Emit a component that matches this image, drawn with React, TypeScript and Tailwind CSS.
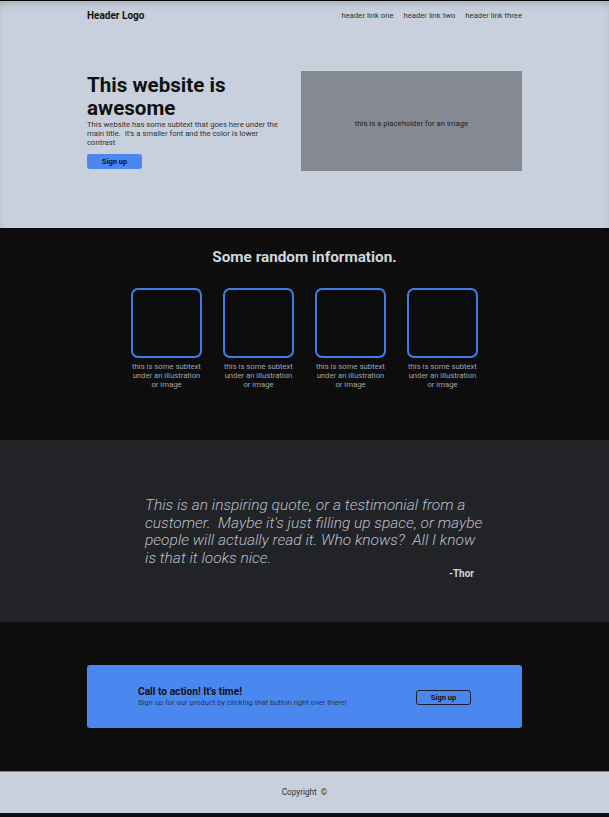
import React from "react";

const features = [1, 2, 3, 4];

export default function App() {
  return (
    <div
      className="bg-[#0d0d0d] min-h-screen"
      style={{ fontFamily: "Roboto, 'Noto Sans', sans-serif" }}
    >
      {/* Hero */}
      <section className="h-[228px] border-t border-black bg-[#c7d0dc] shadow-[inset_0_5px_8px_-4px_rgba(0,0,0,0.25)]">
        <div className="w-[435px] mx-auto">
          <header className="h-[28px] flex items-center justify-between">
            <span className="text-[10px] font-bold text-[#111]">Header Logo</span>
            <nav className="flex gap-[10px] pt-[2px] text-[7.7px] text-[#333]">
              <span>header link one</span>
              <span>header link two</span>
              <span>header link three</span>
            </nav>
          </header>
          <div className="mt-[42px] flex items-center justify-between">
            <div className="w-[198px] pt-[2px]">
              <h1 className="text-[20.6px] leading-[23px] font-bold text-[#111]">
                This website is awesome
              </h1>
              <p className="text-[7.7px] leading-[9px] text-[#333]">
                This website has some subtext that goes here under the main
                title.&nbsp; It's a smaller font and the color is lower contrast
              </p>
              <button className="mt-[5px] w-[55px] h-[15px] rounded-[3px] bg-[#4a88f0] text-[7.5px] font-bold text-[#111]">
                Sign up
              </button>
            </div>
            <div className="w-[221px] h-[100px] pt-[6px] bg-[#858a92] flex items-center justify-center text-[7.7px] text-[#222]">
              this is a placeholder for an image
            </div>
          </div>
        </div>
      </section>

      {/* Info */}
      <section className="h-[212px] bg-[#0d0d0d] pt-[19px]">
        <h2 className="text-center text-[15.3px] leading-[20px] font-bold text-[#d0d6df]">
          Some random information.
        </h2>
        <div className="mt-[21px] flex justify-center gap-[21px]">
          {features.map((f) => (
            <div key={f} className="w-[71px]">
              <div className="h-[70px] rounded-[7px] border-2 border-[#3f7de6]" />
              <p className="mt-[4px] -mx-[2px] text-center text-[7.7px] leading-[9px] text-[#a0a4ab]">
                this is some subtext under an illustration or image
              </p>
            </div>
          ))}
        </div>
      </section>

      {/* Quote */}
      <section className="h-[182px] bg-[#222327] pt-[57px]">
        <div className="w-[435px] mx-auto pl-[58px]">
          <div className="w-[338px]">
            <p className="text-[15.5px] leading-[17.7px] font-light italic text-[#b9bfc9]">
              This is an inspiring quote, or a testimonial from a customer.&nbsp;
              Maybe it's just filling up space, or maybe people will actually
              read it. Who knows?&nbsp; All I know is that it looks nice.
            </p>
            <p className="pr-[9px] text-right text-[10px] leading-[12px] font-bold text-[#d0d6df]">
              -Thor
            </p>
          </div>
        </div>
      </section>

      {/* CTA */}
      <section className="h-[149px] bg-[#0d0d0d] pt-[43px]">
        <div className="w-[435px] h-[63px] mx-auto rounded-[3px] bg-[#4a88f0] px-[51px] flex items-center justify-between">
          <div>
            <h3 className="text-[10.2px] leading-[12px] font-bold text-[#111]">
              Call to action! It's time!
            </h3>
            <p className="text-[7.6px] leading-[9px] text-[#2a3550]">
              Sign up for our product by clicking that button right over there!
            </p>
          </div>
          <button className="mt-[2px] w-[55px] h-[15px] rounded-[3px] border border-[#1a1f2b] text-[7.5px] font-bold text-[#111]">
            Sign up
          </button>
        </div>
      </section>

      {/* Footer */}
      <footer className="h-[42px] border-t border-[#7f858d] bg-[#c7d0dc] flex items-center justify-center text-[8.2px] text-[#333]">
        Copyright&nbsp;&nbsp;©
      </footer>
    </div>
  );
}
